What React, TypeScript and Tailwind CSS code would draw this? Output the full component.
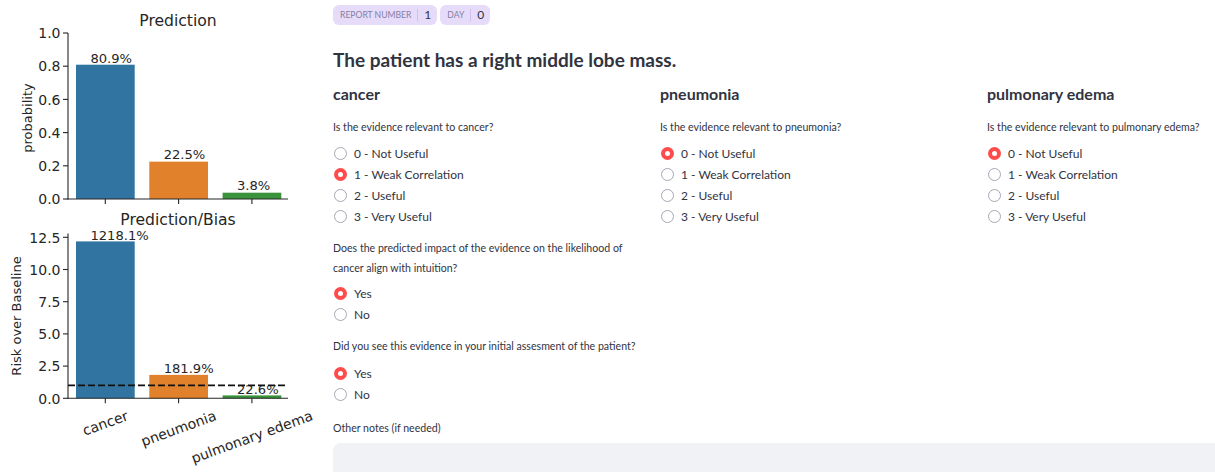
import React from "react";

const INK = "#262626";
const BAR_COLORS = ["#3274a1", "#e1812c", "#3a923a"];
const BAR_X = [76, 149.3, 222.6];
const BAR_W = 58.7;
const TICK_X = [105.3, 178.6, 251.9];
const CATEGORIES = ["cancer", "pneumonia", "pulmonary edema"];

const prob = [0.809, 0.225, 0.038];
const probLabels = ["80.9%", "22.5%", "3.8%"];
const risk = [12.181, 1.819, 0.226];
const riskLabels = ["1218.1%", "181.9%", "22.6%"];

const yTop = (v: number) => 199 - 166 * v;
const yBot = (v: number) => 398.3 - 12.88 * v;

function Charts() {
  const font = "DejaVu Sans";
  return (
    <svg width={320} height={472} viewBox="0 0 320 472" fontFamily={font}>
      {/* upper panel: prediction probabilities */}
      <text x={178} y={26} fontSize={15.6} textAnchor="middle" fill={INK}>
        Prediction
      </text>
      {prob.map((v, i) => (
        <rect key={i} x={BAR_X[i]} y={yTop(v)} width={BAR_W} height={199 - yTop(v)} fill={BAR_COLORS[i]} />
      ))}
      {prob.map((v, i) => (
        <text key={i} x={BAR_X[i] + 14.4} y={yTop(v) - 2.2} fontSize={13.1} fill={INK}>
          {probLabels[i]}
        </text>
      ))}
      <line x1={68} y1={33} x2={68} y2={199.5} stroke={INK} strokeWidth={1.1} />
      <line x1={67.5} y1={199} x2={288} y2={199} stroke={INK} strokeWidth={1.1} />
      {[0, 0.2, 0.4, 0.6, 0.8, 1.0].map((v) => (
        <g key={v}>
          <line x1={63} y1={yTop(v)} x2={68} y2={yTop(v)} stroke={INK} strokeWidth={1.1} />
          <text x={60.5} y={yTop(v) + 5.2} fontSize={14} textAnchor="end" fill={INK}>
            {v.toFixed(1)}
          </text>
        </g>
      ))}
      {TICK_X.map((x) => (
        <line key={x} x1={x} y1={199} x2={x} y2={204} stroke={INK} strokeWidth={1.1} />
      ))}
      <text
        x={0}
        y={0}
        fontSize={13}
        textAnchor="middle"
        fill={INK}
        transform="translate(32 118) rotate(-90)"
      >
        probability
      </text>

      {/* lower panel: prediction relative to baseline */}
      <text x={178} y={225} fontSize={15.6} textAnchor="middle" fill={INK}>
        Prediction/Bias
      </text>
      {risk.map((v, i) => (
        <rect key={i} x={BAR_X[i]} y={yBot(v)} width={BAR_W} height={398.3 - yBot(v)} fill={BAR_COLORS[i]} />
      ))}
      {risk.map((v, i) => (
        <text key={i} x={BAR_X[i] + 14.4} y={yBot(v) - 1.8} fontSize={13.1} fill={INK}>
          {riskLabels[i]}
        </text>
      ))}
      <line x1={68} y1={385.4} x2={288} y2={385.4} stroke="#111" strokeWidth={1.8} strokeDasharray="7 3" />
      <line x1={68} y1={233.5} x2={68} y2={398.8} stroke={INK} strokeWidth={1.1} />
      <line x1={67.5} y1={398.3} x2={288} y2={398.3} stroke={INK} strokeWidth={1.1} />
      {[0, 2.5, 5, 7.5, 10, 12.5].map((v) => (
        <g key={v}>
          <line x1={63} y1={yBot(v)} x2={68} y2={yBot(v)} stroke={INK} strokeWidth={1.1} />
          <text x={60.5} y={yBot(v) + 5.2} fontSize={14} textAnchor="end" fill={INK}>
            {v.toFixed(1)}
          </text>
        </g>
      ))}
      {TICK_X.map((x) => (
        <line key={x} x1={x} y1={398.3} x2={x} y2={403.3} stroke={INK} strokeWidth={1.1} />
      ))}
      {CATEGORIES.map((c, i) => {
        const w = [47, 78.5, 127.5][i];
        const h = w * Math.sin((20 * Math.PI) / 180) + 16 * Math.cos((20 * Math.PI) / 180);
        const cy = 407.5 + h / 2;
        return (
          <text
            key={c}
            x={0}
            y={0}
            fontSize={14}
            textAnchor="middle"
            dominantBaseline="central"
            fill={INK}
            transform={`translate(${TICK_X[i]} ${cy}) rotate(-20)`}
          >
            {c}
          </text>
        );
      })}
      <text
        x={0}
        y={0}
        fontSize={13}
        textAnchor="middle"
        fill={INK}
        transform="translate(20.5 316) rotate(-90)"
      >
        Risk over Baseline
      </text>
    </svg>
  );
}

function Radio({ label, checked }: { label: string; checked?: boolean }) {
  return (
    <div className="flex h-[21px] items-center">
      {checked ? (
        <span className="ml-[1px] flex h-[13px] w-[13px] items-center justify-center rounded-full bg-[#ff4b4b]">
          <span className="h-[5px] w-[5px] rounded-full bg-white" />
        </span>
      ) : (
        <span className="ml-[1px] h-[13px] w-[13px] rounded-full border border-[#a3a8b4] bg-white" />
      )}
      <span className="ml-[7px] text-[12px] leading-[21px] text-[#31333f]">{label}</span>
    </div>
  );
}

const SCALE = ["0 - Not Useful", "1 - Weak Correlation", "2 - Useful", "3 - Very Useful"];

function RelevanceColumn({ name, selected }: { name: string; selected: number }) {
  return (
    <div className="flex w-[311px] flex-col">
      <div className="mt-[10px] text-[16px] font-bold leading-[20px] text-[#31333f]">{name}</div>
      <div className="mt-[14px] text-[10.6px] leading-[18px] text-[#31333f]">
        Is the evidence relevant to {name}?
      </div>
      <div className="mt-[7px] flex flex-col">
        {SCALE.map((s, i) => (
          <Radio key={s} label={s} checked={i === selected} />
        ))}
      </div>
    </div>
  );
}

function Badge({ label, value }: { label: string; value: string }) {
  return (
    <div className="flex h-[20px] items-center rounded-[6px] bg-[#e6dcfa] pl-[7px] pr-[6px]">
      <span className="text-[8.6px] uppercase leading-none text-[#857fa3]">{label}</span>
      <span className="mx-[6px] h-[12px] w-px bg-[#cdbff0]" />
      <span className="text-[12px] leading-none text-[#31333f]">{value}</span>
    </div>
  );
}

export default function App() {
  return (
    <div className="flex h-[472px] w-[1215px] overflow-hidden bg-white font-['Lato',sans-serif]">
      <div className="w-[320px] shrink-0">
        <Charts />
      </div>
      <div className="ml-[13px] flex w-[965px] shrink-0 flex-col">
        <div className="mt-[5px] flex gap-[3px]">
          <Badge label="Report number" value="1" />
          <Badge label="Day" value="0" />
        </div>
        <h2 className="mt-[21px] text-[19px] font-bold leading-[28px] text-[#31333f]">
          The patient has a right middle lobe mass.
        </h2>
        <div className="flex gap-[16px]">
          <div className="flex w-[311px] flex-col">
            <RelevanceColumn name="cancer" selected={1} />
            <div className="mt-[11px] text-[10.6px] leading-[20px] text-[#31333f]">
              Does the predicted impact of the evidence on the likelihood of cancer align with intuition?
            </div>
            <div className="mt-[5px] flex flex-col">
              <Radio label="Yes" checked />
              <Radio label="No" />
            </div>
            <div className="mt-[11px] text-[10.6px] leading-[20px] text-[#31333f]">
              Did you see this evidence in your initial assesment of the patient?
            </div>
            <div className="mt-[7px] flex flex-col">
              <Radio label="Yes" checked />
              <Radio label="No" />
            </div>
          </div>
          <RelevanceColumn name="pneumonia" selected={0} />
          <RelevanceColumn name="pulmonary edema" selected={0} />
        </div>
        <div className="mt-[13px] text-[10.6px] leading-[20px] text-[#31333f]">Other notes (if needed)</div>
        <div className="mt-[5px] h-[80px] w-full shrink-0 rounded-[8px] bg-[#f0f2f6]" />
      </div>
    </div>
  );
}
